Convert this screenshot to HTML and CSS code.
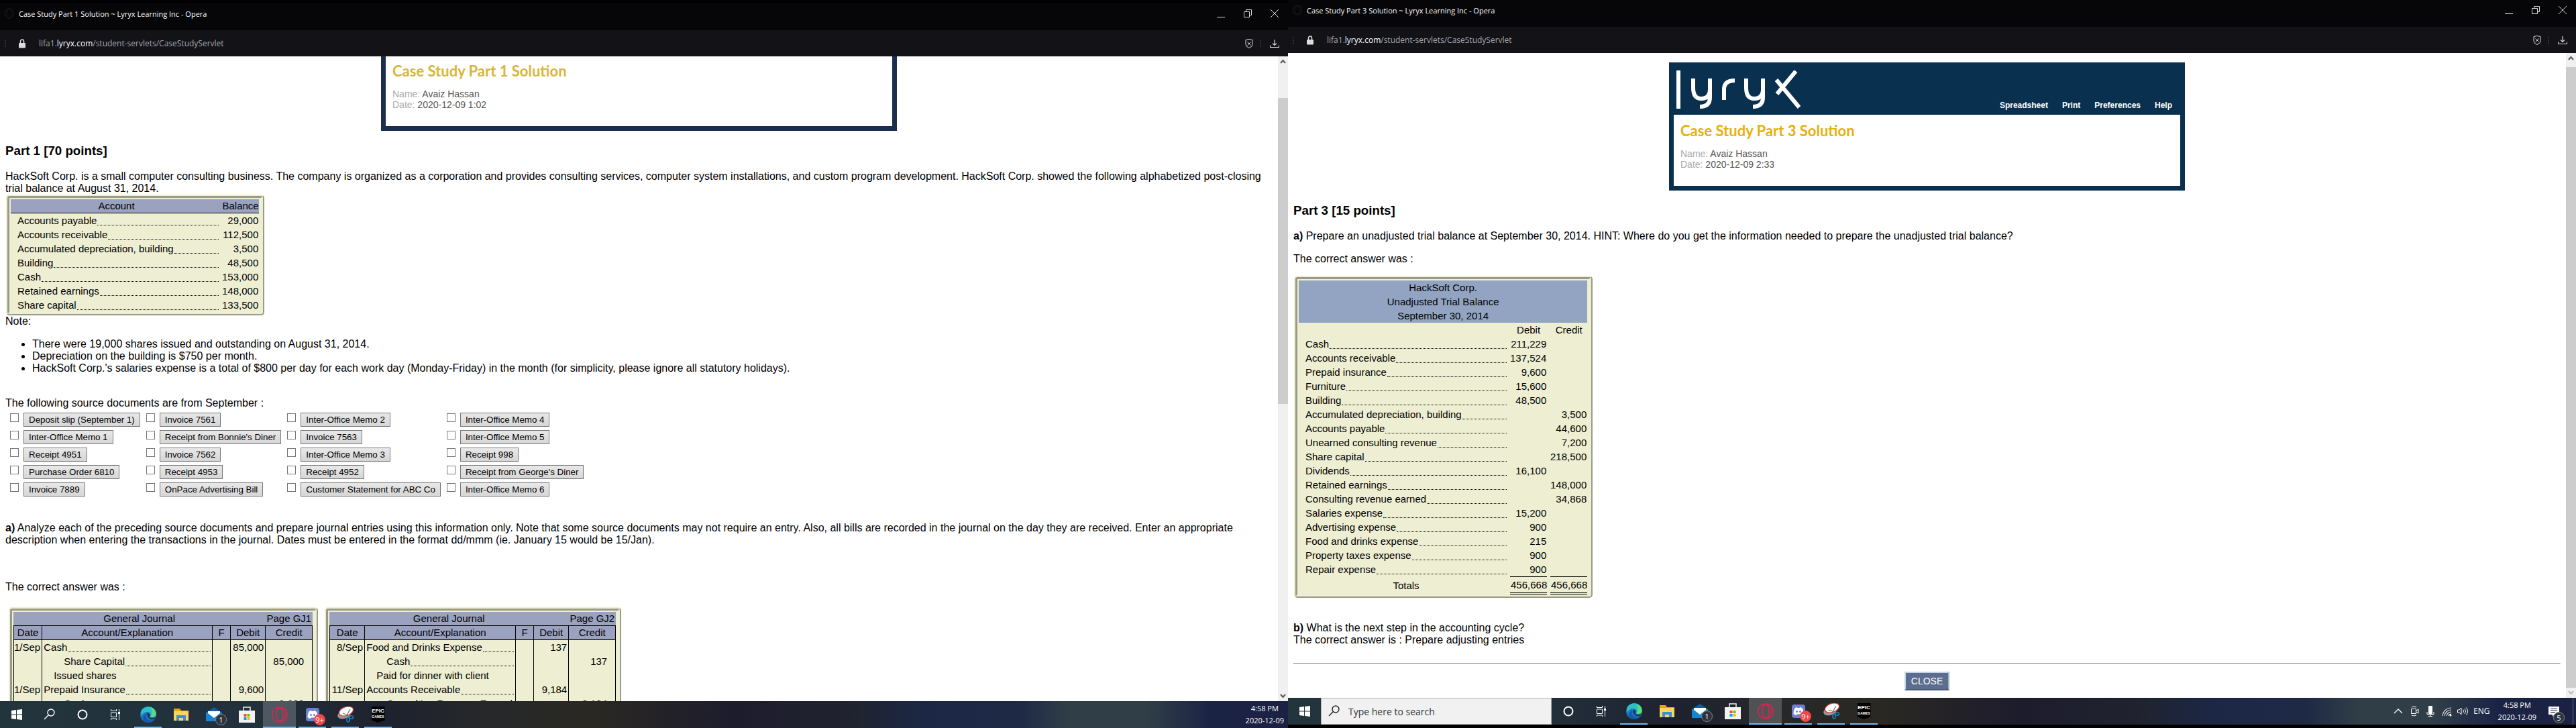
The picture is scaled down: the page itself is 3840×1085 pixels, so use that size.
FILE: index.html
```html
<!DOCTYPE html>
<html lang="en">
<head>
  <meta charset="UTF-8" />
  <meta name="viewport" content="width=device-width, initial-scale=1.0" />
  <title>Case Study Solutions ~ Lyryx Learning Inc</title>
  <link rel="stylesheet" href="styles.css">
</head>
<body>

  <!-- Shared icons -->
  <svg class="sprite" aria-hidden="true">
    <symbol id="i-opera-dim" viewBox="0 0 16 28"><ellipse cx="8" cy="14" rx="6" ry="7" fill="none" stroke="#131315" stroke-width="2"/><ellipse cx="8" cy="14" rx="3" ry="6" fill="none" stroke="#131315"/></symbol>
    <symbol id="i-min" viewBox="0 0 12 12"><path d="M0 11.5h12" stroke="#ddd"/></symbol>
    <symbol id="i-restore" viewBox="0 0 12 12"><path d="M.5 3.5h8v8h-8zM3.5 3.500v-3h8v8h-3" fill="none" stroke="#ddd"/></symbol>
    <symbol id="i-close" viewBox="0 0 12 12"><path d="M0 0l12 12M12 0L0 12" stroke="#ddd"/></symbol>
    <symbol id="i-lock" viewBox="0 0 12 14"><rect x="1" y="6" width="10" height="7.500" rx="1" fill="#ddd"/><path d="M3.500 6V3.500a2.500 2.500 0 0 1 5 0V6" fill="none" stroke="#ddd" stroke-width="1.500"/></symbol>
    <symbol id="i-shield" viewBox="0 0 12 14"><path d="M1 1.500q5-2 10 0v7q0 3-5 5-5-2-5-5zM3.500 4.500l5 5M8.500 4.500l-5 5" fill="none" stroke="#ddd"/></symbol>
    <symbol id="i-download" viewBox="0 0 14 14"><path d="M7 1v8M4 6.500l3 3 3-3M.5 9.500v3h13v-3" fill="none" stroke="#ddd" stroke-width="1.200"/></symbol>
    <symbol id="i-up" viewBox="0 0 9 7"><path d="M1 6l3.500-4L8 6" fill="none" stroke="currentColor" stroke-width="2"/></symbol>
    <symbol id="i-down" viewBox="0 0 9 7"><path d="M1 1l3.500 4L8 1" fill="none" stroke="currentColor" stroke-width="2"/></symbol>

    <symbol id="i-windows" viewBox="0 0 24 24"><path d="M4 6l7-1v6.500H4zM12 5l8-1v7.500h-8zM4 12.500h7V19l-7-1zM12 12.500h8V20l-8-1z" fill="#fff"/></symbol>
    <symbol id="i-search" viewBox="0 0 24 24"><circle cx="14" cy="9" r="5" fill="none" stroke="currentColor" stroke-width="1.400"/><path d="M10.500 12.500L4 19" stroke="currentColor" stroke-width="1.400"/></symbol>
    <symbol id="i-cortana" viewBox="0 0 24 24"><circle cx="12" cy="12" r="6.500" fill="none" stroke="#fff" stroke-width="2"/></symbol>
    <symbol id="i-taskview" viewBox="0 0 24 24"><path d="M5.500 9h8v6.500h-8zM5.500 4v2.500h8V4M5.500 20v-2h8v2M17.500 4v16" fill="none" stroke="#fff"/><path d="M16 8h3v3h-3z" fill="#fff"/></symbol>
    <symbol id="i-edge" viewBox="0 0 24 24"><circle cx="12" cy="12" r="12" fill="#1b74c4"/><path d="M1 8C4-2 21-3 23.500 9c1 6-5 8-8.500 6 2-3 0-7-4-7C6 8 3 11 2 15z" fill="#2ec0c8"/><path d="M15 1c6 2 9 6 8.700 11-.7 4-5 5-8.700 3.300 3-4 4-9 0-14.300z" fill="#5bdc75"/><path d="M10 11c-3 3-1 9 4 10 3 .5 6-1 8-3-4 7-14 8-18 2 0-5 2-8 6-9z" fill="#1558a5"/><path d="M10.500 10c3-.5 4.500 2 2.500 5 2 3 6 3 9.500 1l-1 2.500c-6 2.500-11-1-11-8.500z" fill="#20303a"/></symbol>
    <symbol id="i-folder" viewBox="0 0 24 24"><path d="M1 3h9l2 3h11v4H1z" fill="#e8a60c"/><path d="M1 7h22v14H1z" fill="#fcd462"/><path d="M5 21v-8h14v8h-4v-4H9v4z" fill="#3b8fd6"/></symbol>
    <symbol id="i-mail" viewBox="0 0 24 24"><path d="M0 9l12-8 12 8z" fill="#0d5ea8"/><path d="M0 9h24v13H0z" fill="#1685d8"/><path d="M3 7h18v3l-9 7-9-7z" fill="#fff"/><path d="M0 9l12 9L24 9v13H0z" fill="#1685d8"/></symbol>
    <symbol id="i-store" viewBox="0 0 24 24"><path d="M7 6V1h10v5" fill="none" stroke="#eee" stroke-width="1.500"/><path d="M0 6h24v18H0z" fill="#f2f2f2"/><path d="M7.500 11h4v4h-4z" fill="#f25022"/><path d="M12.500 11h4v4h-4z" fill="#7fba00"/><path d="M7.500 16h4v4h-4z" fill="#00a4ef"/><path d="M12.500 16h4v4h-4z" fill="#ffb900"/></symbol>
    <symbol id="i-opera" viewBox="0 0 24 24"><g fill="none" stroke="#e0234e"><circle cx="12" cy="12" r="11.200" stroke-width="1.300"/><ellipse cx="12" cy="12" rx="5" ry="10" stroke-width="1.500"/><path d="M15 2.500c7 3 7 16 0 19"/></g></symbol>
    <symbol id="i-discord" viewBox="0 0 24 24"><rect x="2" y="2" width="20" height="20" rx="4" fill="#6c7fd0"/><path d="M6 8q2-2 4-2l.5 1h3l.5-1q2 0 4 2 2 4 1.500 8-2 2-4 2l-1-1.500h-5L8.500 18q-2 0-4-2Q4.500 12 6 8z" fill="#fff"/><circle cx="9.500" cy="12.500" r="1.500" fill="#6c7fd0"/><circle cx="14.500" cy="12.500" r="1.500" fill="#6c7fd0"/></symbol>
    <symbol id="i-snip" viewBox="0 0 24 24"><ellipse cx="10" cy="12" rx="10" ry="6" fill="#999" transform="rotate(-15 10 12)"/><ellipse cx="13" cy="7" rx="11" ry="6.500" fill="#fff" stroke="#d33a32" stroke-width="1.300" transform="rotate(-20 13 7)"/><path d="M19 4l-5 9M8 10l8 3" stroke="#777" stroke-width="1.300"/><g fill="none" stroke="#1e86c8" stroke-width="1.600"><ellipse cx="20.500" cy="16" rx="3.200" ry="2"/><ellipse cx="16" cy="19.500" rx="2" ry="3.500"/></g></symbol>
    <symbol id="i-tray-up" viewBox="0 0 16 16"><path d="M2 11l6-6 6 6" fill="none" stroke="#fff" stroke-width="1.300"/></symbol>
    <symbol id="i-camera" viewBox="0 0 16 16"><path d="M3.500 4.500h7v7h-7zM11 7l3-2v6l-3-2M4 2q3.500-2 7 0M4 14q3.500 2 7 0" fill="none" stroke="#fff"/></symbol>
    <symbol id="i-mic" viewBox="0 0 16 16"><rect x="5" y="0" width="6" height="12" rx="1" fill="#fff"/><path d="M3 9v3.500h10V9M8 12v3.500M5 15.500h6" fill="none" stroke="#fff"/></symbol>
    <symbol id="i-wifi" viewBox="0 0 16 16"><path d="M2 15A13 13 0 0 1 15 3M5 15A10 10 0 0 1 15 6M8 15a7 7 0 0 1 7-6M11 15a4 4 0 0 1 4-3" fill="none" stroke="#ddd" stroke-width="1.200"/><circle cx="14" cy="14" r="1.500" fill="#fff"/></symbol>
    <symbol id="i-sound" viewBox="0 0 16 16"><path d="M.5 6h2.500l3-3v10l-3-3H.5zM8.500 5.500q2 2.500 0 5M11 4q3 4 0 8M13.500 2.500q4 5.500 0 11" fill="none" stroke="#fff"/></symbol>
    <symbol id="i-notes" viewBox="0 0 16 16"><path d="M0 1h16v12h-7l-3 3v-3H0z" fill="#fff"/><path d="M3 4.500h10M3 7h10M3 9.500h7" stroke="#1c2443"/></symbol>
  </svg>

  <!-- Left screen -->
  <div class="screen screen-left">
    <header class="title-bar">
      <svg class="opera-dim"><use href="#i-opera-dim"/></svg>
      <span class="window-title">Case Study Part 1 Solution ~ Lyryx Learning Inc - Opera</span>
      <button class="win-btn" aria-label="Minimize"><svg><use href="#i-min"/></svg></button>
      <button class="win-btn" aria-label="Restore"><svg><use href="#i-restore"/></svg></button>
      <button class="win-btn" aria-label="Close"><svg><use href="#i-close"/></svg></button>
    </header>
    <div class="address-bar">
      <span class="grip"></span>
      <svg class="lock"><use href="#i-lock"/></svg>
      <span class="url">lifa1.<b>lyryx.com</b>/student-servlets/CaseStudyServlet</span>
      <svg class="shield"><use href="#i-shield"/></svg>
      <span class="grip"></span>
      <svg class="download"><use href="#i-download"/></svg>
    </div>

    <div class="viewport">
      <main class="doc doc-scrolled">
        <div class="card card-faded">
          <div class="card-body">
            <h2>Case Study Part 1 Solution</h2>
            <div><span class="key">Name:</span> Avaiz Hassan</div>
            <div><span class="key">Date:</span> 2020-12-09 1:02</div>
          </div>
        </div>

        <h3>Part 1 [70 points]</h3>
        <p class="intro">HackSoft Corp. is a small computer consulting business. The company is organized as a corporation and provides consulting services, computer system installations, and custom program development. HackSoft Corp. showed the following alphabetized post-closing trial balance at August 31, 2014.</p>

        <table class="ledger">
          <thead>
            <tr><th class="name">Account</th><th class="amount">Balance</th></tr>
          </thead>
          <tbody>
            <tr><td><div class="leader">Accounts payable</div></td><td>29,000</td></tr>
            <tr><td><div class="leader">Accounts receivable</div></td><td>112,500</td></tr>
            <tr><td><div class="leader">Accumulated depreciation, building</div></td><td>3,500</td></tr>
            <tr><td><div class="leader">Building</div></td><td>48,500</td></tr>
            <tr><td><div class="leader">Cash</div></td><td>153,000</td></tr>
            <tr><td><div class="leader">Retained earnings</div></td><td>148,000</td></tr>
            <tr><td><div class="leader">Share capital</div></td><td>133,500</td></tr>
          </tbody>
        </table>
        <div>Note:</div>
        <ul>
          <li>There were 19,000 shares issued and outstanding on August 31, 2014.</li>
          <li>Depreciation on the building is $750 per month.</li>
          <li>HackSoft Corp.'s salaries expense is a total of $800 per day for each work day (Monday-Friday) in the month (for simplicity, please ignore all statutory holidays).</li>
        </ul>

        <div class="sources-title">The following source documents are from September :</div>
        <div class="sources">
          <div><input type="checkbox" aria-label="Deposit slip (September 1)"><button>Deposit slip (September 1)</button></div>
          <div><input type="checkbox" aria-label="Invoice 7561"><button>Invoice 7561</button></div>
          <div><input type="checkbox" aria-label="Inter-Office Memo 2"><button>Inter-Office Memo 2</button></div>
          <div><input type="checkbox" aria-label="Inter-Office Memo 4"><button>Inter-Office Memo 4</button></div>

          <div><input type="checkbox" aria-label="Inter-Office Memo 1"><button>Inter-Office Memo 1</button></div>
          <div><input type="checkbox" aria-label="Receipt from Bonnie's Diner"><button>Receipt from Bonnie's Diner</button></div>
          <div><input type="checkbox" aria-label="Invoice 7563"><button>Invoice 7563</button></div>
          <div><input type="checkbox" aria-label="Inter-Office Memo 5"><button>Inter-Office Memo 5</button></div>

          <div><input type="checkbox" aria-label="Receipt 4951"><button>Receipt 4951</button></div>
          <div><input type="checkbox" aria-label="Invoice 7562"><button>Invoice 7562</button></div>
          <div><input type="checkbox" aria-label="Inter-Office Memo 3"><button>Inter-Office Memo 3</button></div>
          <div><input type="checkbox" aria-label="Receipt 998"><button>Receipt 998</button></div>

          <div><input type="checkbox" aria-label="Purchase Order 6810"><button>Purchase Order 6810</button></div>
          <div><input type="checkbox" aria-label="Receipt 4953"><button>Receipt 4953</button></div>
          <div><input type="checkbox" aria-label="Receipt 4952"><button>Receipt 4952</button></div>
          <div><input type="checkbox" aria-label="Receipt from George's Diner"><button>Receipt from George's Diner</button></div>

          <div><input type="checkbox" aria-label="Invoice 7889"><button>Invoice 7889</button></div>
          <div><input type="checkbox" aria-label="OnPace Advertising Bill"><button>OnPace Advertising Bill</button></div>
          <div><input type="checkbox" aria-label="Customer Statement for ABC Co"><button>Customer Statement for ABC Co</button></div>
          <div><input type="checkbox" aria-label="Inter-Office Memo 6"><button>Inter-Office Memo 6</button></div>
        </div>

        <p class="question"><b>a)</b> Analyze each of the preceding source documents and prepare journal entries using this information only. Note that some source documents may not require an entry. Also, all bills are recorded in the journal on the day they are received. Enter an appropriate description when entering the transactions in the journal. Dates must be entered in the format dd/mmm (ie. January 15 would be 15/Jan).</p>
        <p class="answer">The correct answer was :</p>

        <div class="journals">
          <table class="journal">
            <thead>
              <tr class="page"><th colspan="4">General Journal</th><th>Page GJ1</th></tr>
              <tr><th class="date">Date</th><th class="acct">Account/Explanation</th><th class="folio">F</th><th class="debit">Debit</th><th class="credit">Credit</th></tr>
            </thead>
            <tbody>
              <tr><td>1/Sep</td><td><div class="leader">Cash</div></td><td></td><td>85,000</td><td></td></tr>
              <tr><td></td><td><div class="leader indent">Share Capital</div></td><td></td><td></td><td>85,000</td></tr>
              <tr><td></td><td class="memo">Issued shares</td><td></td><td></td><td></td></tr>
              <tr><td>1/Sep</td><td><div class="leader">Prepaid Insurance</div></td><td></td><td>9,600</td><td></td></tr>
              <tr><td></td><td><div class="leader indent">Cash</div></td><td></td><td></td><td>9,600</td></tr>
            </tbody>
          </table>
          <table class="journal journal-two">
            <thead>
              <tr class="page"><th colspan="4">General Journal</th><th>Page GJ2</th></tr>
              <tr><th class="date">Date</th><th class="acct">Account/Explanation</th><th class="folio">F</th><th class="debit">Debit</th><th class="credit">Credit</th></tr>
            </thead>
            <tbody>
              <tr><td>8/Sep</td><td><div class="leader">Food and Drinks Expense</div></td><td></td><td>137</td><td></td></tr>
              <tr><td></td><td><div class="leader indent">Cash</div></td><td></td><td></td><td>137</td></tr>
              <tr><td></td><td class="memo">Paid for dinner with client</td><td></td><td></td><td></td></tr>
              <tr><td>11/Sep</td><td><div class="leader">Accounts Receivable</div></td><td></td><td>9,184</td><td></td></tr>
              <tr><td></td><td><div class="leader indent">Consulting Revenue Earned</div></td><td></td><td></td><td>9,184</td></tr>
            </tbody>
          </table>
        </div>
      </main>
      <div class="scrollbar">
        <svg><use href="#i-up"/></svg>
        <div class="track"><div class="thumb thumb-left"></div></div>
        <svg><use href="#i-down"/></svg>
      </div>
    </div>

    <footer class="taskbar">
      <div class="task"><svg><use href="#i-windows"/></svg></div>
      <div class="task"><svg><use href="#i-search"/></svg></div>
      <div class="task"><svg><use href="#i-cortana"/></svg></div>
      <div class="task"><svg><use href="#i-taskview"/></svg></div>
      <div class="task open"><svg><use href="#i-edge"/></svg></div>
      <div class="task"><svg><use href="#i-folder"/></svg></div>
      <div class="task"><svg><use href="#i-mail"/></svg><span class="badge">1</span></div>
      <div class="task"><svg><use href="#i-store"/></svg></div>
      <div class="task open current"><svg><use href="#i-opera"/></svg></div>
      <div class="task open"><svg><use href="#i-discord"/></svg><span class="badge badge-red">9+</span></div>
      <div class="task open"><svg><use href="#i-snip"/></svg></div>
      <div class="task open"><span class="epic">EPIC<small>GAMES</small></span></div>
      <div class="tray">
        <div class="clock">4:58 PM<br>2020-12-09</div>
      </div>
    </footer>
  </div>

  <!-- Right screen -->
  <div class="screen screen-right">
    <header class="title-bar">
      <svg class="opera-dim"><use href="#i-opera-dim"/></svg>
      <span class="window-title">Case Study Part 3 Solution ~ Lyryx Learning Inc - Opera</span>
      <button class="win-btn" aria-label="Minimize"><svg><use href="#i-min"/></svg></button>
      <button class="win-btn" aria-label="Restore"><svg><use href="#i-restore"/></svg></button>
      <button class="win-btn" aria-label="Close"><svg><use href="#i-close"/></svg></button>
    </header>
    <div class="address-bar">
      <span class="grip"></span>
      <svg class="lock"><use href="#i-lock"/></svg>
      <span class="url">lifa1.<b>lyryx.com</b>/student-servlets/CaseStudyServlet</span>
      <svg class="shield"><use href="#i-shield"/></svg>
      <span class="grip"></span>
      <svg class="download"><use href="#i-download"/></svg>
    </div>

    <div class="viewport">
      <main class="doc">
        <div class="card">
          <div class="banner">
            <svg class="logo" viewBox="0 0 186 57" role="img" aria-label="lyryx">
              <g fill="none" stroke="#fff" stroke-width="6">
                <path d="M3 0v57"/>
                <path d="M25 12v14q0 16 12 16 13 0 13-14V12M50 26v14q0 14-15 14"/>
                <path d="M71 44V28q0-13 16-13"/>
                <path d="M104 12v14q0 16 12 16 13 0 13-14V12M129 26v14q0 14-15 14"/>
                <path d="M178 1l-28 34M149 14l34 41"/>
              </g>
            </svg>
            <nav>
              <a href="#">Spreadsheet</a>
              <a href="#">Print</a>
              <a href="#">Preferences</a>
              <a href="#">Help</a>
            </nav>
          </div>
          <div class="card-body">
            <h2>Case Study Part 3 Solution</h2>
            <div><span class="key">Name:</span> Avaiz Hassan</div>
            <div><span class="key">Date:</span> 2020-12-09 2:33</div>
          </div>
        </div>

        <h3>Part 3 [15 points]</h3>
        <p><b>a)</b> Prepare an unadjusted trial balance at September 30, 2014. HINT: Where do you get the information needed to prepare the unadjusted trial balance?</p>
        <p>The correct answer was :</p>

        <table class="ledger trial">
          <thead>
            <tr><th colspan="3">HackSoft Corp.</th></tr>
            <tr><th colspan="3">Unadjusted Trial Balance</th></tr>
            <tr><th colspan="3">September 30, 2014</th></tr>
            <tr class="columns"><td class="name"></td><td class="amount">Debit</td><td class="amount amount-last">Credit</td></tr>
          </thead>
          <tbody>
            <tr><td><div class="leader">Cash</div></td><td>211,229</td><td></td></tr>
            <tr><td><div class="leader">Accounts receivable</div></td><td>137,524</td><td></td></tr>
            <tr><td><div class="leader">Prepaid insurance</div></td><td>9,600</td><td></td></tr>
            <tr><td><div class="leader">Furniture</div></td><td>15,600</td><td></td></tr>
            <tr><td><div class="leader">Building</div></td><td>48,500</td><td></td></tr>
            <tr><td><div class="leader">Accumulated depreciation, building</div></td><td></td><td>3,500</td></tr>
            <tr><td><div class="leader">Accounts payable</div></td><td></td><td>44,600</td></tr>
            <tr><td><div class="leader">Unearned consulting revenue</div></td><td></td><td>7,200</td></tr>
            <tr><td><div class="leader">Share capital</div></td><td></td><td>218,500</td></tr>
            <tr><td><div class="leader">Dividends</div></td><td>16,100</td><td></td></tr>
            <tr><td><div class="leader">Retained earnings</div></td><td></td><td>148,000</td></tr>
            <tr><td><div class="leader">Consulting revenue earned</div></td><td></td><td>34,868</td></tr>
            <tr><td><div class="leader">Salaries expense</div></td><td>15,200</td><td></td></tr>
            <tr><td><div class="leader">Advertising expense</div></td><td>900</td><td></td></tr>
            <tr><td><div class="leader">Food and drinks expense</div></td><td>215</td><td></td></tr>
            <tr><td><div class="leader">Property taxes expense</div></td><td>900</td><td></td></tr>
            <tr><td><div class="leader">Repair expense</div></td><td>900</td><td></td></tr>
          </tbody>
          <tfoot>
            <tr><td>Totals</td><td><div class="total">456,668</div></td><td><div class="total total-last">456,668</div></td></tr>
          </tfoot>
        </table>

        <p class="question-b"><b>b)</b> What is the next step in the accounting cycle?<br>The correct answer is : Prepare adjusting entries</p>
        <hr>
        <button class="close-btn">CLOSE</button>
      </main>
      <div class="scrollbar">
        <svg><use href="#i-up"/></svg>
        <div class="track"><div class="thumb thumb-right"></div></div>
        <svg class="faded"><use href="#i-down"/></svg>
      </div>
    </div>

    <footer class="taskbar">
      <div class="task"><svg><use href="#i-windows"/></svg></div>
      <label class="search-box"><svg><use href="#i-search"/></svg><input type="text" placeholder="Type here to search"></label>
      <div class="task"><svg><use href="#i-cortana"/></svg></div>
      <div class="task"><svg><use href="#i-taskview"/></svg></div>
      <div class="task open"><svg><use href="#i-edge"/></svg></div>
      <div class="task"><svg><use href="#i-folder"/></svg></div>
      <div class="task"><svg><use href="#i-mail"/></svg><span class="badge">1</span></div>
      <div class="task"><svg><use href="#i-store"/></svg></div>
      <div class="task open current"><svg><use href="#i-opera"/></svg></div>
      <div class="task open"><svg><use href="#i-discord"/></svg><span class="badge badge-red">9+</span></div>
      <div class="task open"><svg><use href="#i-snip"/></svg></div>
      <div class="task open"><span class="epic">EPIC<small>GAMES</small></span></div>
      <div class="tray tray-full">
        <svg><use href="#i-tray-up"/></svg>
        <svg><use href="#i-camera"/></svg>
        <svg><use href="#i-mic"/></svg>
        <svg><use href="#i-wifi"/></svg>
        <svg><use href="#i-sound"/></svg>
        <span class="lang">ENG</span>
        <div class="clock">4:58 PM<br>2020-12-09</div>
        <div class="notes"><svg><use href="#i-notes"/></svg><span class="badge">5</span></div>
      </div>
      <div class="show-desktop"></div>
    </footer>
  </div>

</body>
</html>
```

FILE: styles.css
```css
* {
  box-sizing: border-box;
}

body {
  margin: 0;
  height: 100vh;
  display: flex;
  background: #000;
  color: #000;
  font-family: "Liberation Sans", Arial, sans-serif;
  font-size: 16px;
  line-height: 18px;
}

svg {
  display: block;
  flex: none;
}

.sprite {
  display: none;
}

/* Each monitor takes half of the window */
.screen {
  flex: 1;
  min-width: 0;
  display: flex;
  flex-direction: column;
}

.screen-left {
  padding-top: 5px;
}

.screen-right {
  padding-bottom: 5px;
}

/* Opera window */
.title-bar {
  height: 40px;
  flex: none;
  display: flex;
  align-items: flex-start;
  background: #060608;
  color: #fff;
  font-family: "Open Sans", sans-serif;
  font-size: 11px;
  padding: 1px 0 0 6px;
}

.opera-dim {
  width: 16px;
  height: 28px;
}

.window-title {
  flex: 1;
  line-height: 30px;
  margin-left: 6px;
}

.win-btn {
  width: 40px;
  height: 28px;
  padding: 0 14px;
  border: none;
  background: none;
}

.win-btn svg {
  width: 12px;
  height: 12px;
}

.address-bar {
  height: 39px;
  flex: none;
  display: flex;
  align-items: center;
  background: #121217;
  color: #a5a7b0;
  font-family: "Open Sans", sans-serif;
  font-size: 12px;
  padding: 0 13px 0 7px;
}

.grip {
  width: 2px;
  height: 10px;
  background: repeating-linear-gradient(#33333b 0 2px, transparent 2px 4px);
}

.lock {
  width: 12px;
  height: 14px;
  margin-left: 18px;
}

.url {
  flex: 1;
  margin-left: 19px;
}

.url b {
  color: #fff;
  font-weight: 400;
}

.shield {
  width: 12px;
  height: 14px;
  margin-right: 10px;
}

.download {
  width: 14px;
  height: 14px;
  margin-left: 13px;
}

.viewport {
  flex: 1;
  min-height: 0;
  display: flex;
  background: #fff;
  overflow: hidden;
}

.doc {
  flex: 1;
  padding: 14px 8px 0;
  overflow: hidden;
}

.doc-scrolled {
  padding-top: 0;
}

.scrollbar {
  width: 15px;
  display: flex;
  flex-direction: column;
  align-items: center;
  background: #f0f0f0;
  color: #555;
}

.scrollbar svg {
  width: 9px;
  height: 7px;
  margin: 4px 0;
}

.scrollbar .faded {
  color: #bbb;
}

.track {
  flex: 1;
  width: 100%;
  display: flex;
  flex-direction: column;
}

.thumb {
  background: #cdcdcd;
}

.thumb-left {
  height: 49%;
  margin-top: 47px;
}

.thumb-right {
  flex: 1;
  margin-top: 6px;
}

/* Page header card */
.card {
  width: 769px;
  margin: 0 auto;
  background: #09304f;
  padding: 0 7px 7px;
}

.card-faded {
  background: #1c2e4e;
}

.banner {
  height: 78px;
  display: flex;
  justify-content: space-between;
  align-items: flex-end;
  padding: 0 12px 9px 4px;
}

.logo {
  width: 186px;
  height: 57px;
}

.banner nav {
  display: flex;
  gap: 21px;
  line-height: 10px;
}

.banner a {
  color: #fff;
  font-size: 12px;
  font-weight: bold;
  text-decoration: none;
}

.card-body {
  background: #fff;
  color: #555;
  padding: 12px 10px 24px;
  font-size: 14px;
  line-height: 16px;
}

.card-faded .card-body {
  padding-top: 10px;
}

.card h2 {
  margin: 0 0 14px;
  color: #e8b00c;
  font-family: Lato, sans-serif;
  font-size: 22px;
  line-height: 24px;
}

.card-faded h2 {
  color: #d9b53a;
}

.key {
  color: #aaa;
}

h3 {
  margin: 19px 0 18px;
  line-height: 22px;
}

p {
  margin: 16px 0;
}

.intro {
  margin: 0;
}

/* Ledger tables */
.ledger,
.journal {
  border: 5px ridge #eeeed2;
  border-radius: 5px;
  background: #eeeed2;
  border-spacing: 0;
  padding: 2px 3px 0 2px;
  font-size: 15px;
}

.ledger {
  margin-left: 1px;
}

.ledger th,
.ledger td,
.journal th,
.journal td {
  height: 21px;
  padding: 0;
  font-weight: 400;
}

.ledger th {
  background: #9ba2c0;
}

.ledger thead th {
  border-bottom: 1px solid #000;
}

.ledger .name {
  width: 315px;
}

.ledger .amount {
  width: 55px;
}

.ledger .amount-last {
  width: 60px;
}

.ledger td {
  text-align: right;
  padding-right: 1px;
}

.ledger td:first-child {
  padding: 0 5px 0 10px;
}

.leader {
  display: flex;
}

.leader::after {
  content: '';
  flex: 1;
  border-bottom: 1px dotted #000;
  margin: 0 0 2px 1px;
}

.trial thead th {
  background: #93a4c3;
  border: none;
}

.trial .columns td.amount {
  text-align: center;
  padding: 0;
}

.trial .columns td.amount-last {
  padding-left: 5px;
}

.trial tfoot td {
  height: 27px;
  padding: 0;
}

.trial tfoot td:first-child {
  text-align: center;
}

.total {
  height: 27px;
  padding-top: 3px;
  border-top: 1px solid #000;
  border-bottom: 3px double #000;
}

.total-last {
  margin-left: 5px;
}

ul {
  margin: 16px 0;
  padding-left: 40px;
}

/* Source documents */
.sources-title {
  margin-top: 34px;
}

.sources {
  display: grid;
  grid-template-columns: repeat(4, max-content);
  column-gap: 9px;
  margin: 2px 0 0 7px;
}

.sources div {
  height: 26px;
  display: flex;
  align-items: center;
  gap: 7px;
}

.sources input {
  appearance: none;
  width: 13px;
  height: 13px;
  margin: 0 0 5px;
  border: 1px solid #767676;
  background: #fff;
}

.sources button {
  height: 21px;
  padding: 0 7px;
  border: 1px solid #767676;
  background: linear-gradient(#e8e8e8, #d6d6d6);
  font-family: "Liberation Sans", Arial, sans-serif;
}

.question {
  margin: 36px 0 0;
}

.answer {
  margin: 52px 0 21px;
}

/* General journal pages */
.journals {
  display: flex;
  align-items: flex-start;
  gap: 10px;
  margin-left: 5px;
}

.journal th {
  background: #9ba2c0;
  border-bottom: 1px solid #000;
}

.journal tr:not(.page) > * {
  border-left: 1px solid #000;
}

.journal tr:not(.page) > :last-child {
  border-right: 1px solid #000;
}

.journal .page th:last-child {
  text-align: right;
  padding-right: 2px;
}

.date {
  width: 42px;
}

.acct {
  width: 254px;
}

.folio {
  width: 27px;
}

.debit {
  width: 52px;
}

.credit {
  width: 71px;
}

.journal-two .date {
  width: 52px;
}

.journal-two .acct {
  width: 225px;
}

.journal td {
  text-align: right;
  padding-right: 2px;
}

.journal td:nth-child(2) {
  text-align: left;
  padding-left: 2px;
}

.journal td:last-child {
  padding-right: 12px;
}

.journal .indent {
  padding-left: 30px;
}

.journal td.memo {
  padding-left: 17px;
}

.question-b {
  margin: 36px 0 25px;
}

hr {
  margin: 0 0 11px;
}

.close-btn {
  display: block;
  width: 67px;
  height: 28px;
  margin: 0 auto;
  padding: 0;
  border: 2px solid;
  border-color: #c5d3e2 #9fb2c9 #4c5a70 #c5d3e2;
  background: #5b6e90;
  color: #fff;
  font-family: "Liberation Sans", Arial, sans-serif;
  font-size: 14px;
}

/* Windows taskbar */
.taskbar {
  height: 40px;
  flex: none;
  display: flex;
  color: #fff;
  font-family: "Open Sans", sans-serif;
  background: linear-gradient(to right, #22343c 0, #22303c 20%, #1e222e 30%, #26282a 38%, #2a2822 46%, #1d1c2d 57%, #20232f 66%, #1b2745 72%, #1d2945 79%, #303e48 83%, #303e48 89%, #1b2345 94%, #1b2142 100%);
}

.task {
  width: 49px;
  display: flex;
  align-items: center;
  justify-content: center;
  position: relative;
}

.task svg {
  width: 24px;
  height: 24px;
}

.open::after {
  content: '';
  position: absolute;
  left: 4px;
  right: 4px;
  bottom: 0;
  height: 2px;
  background: #76b9ed;
}

.current {
  background: rgba(255, 255, 255, 0.2);
}

.current::after {
  left: 0;
  right: 0;
}

.badge {
  position: absolute;
  right: 5px;
  bottom: 4px;
  width: 17px;
  height: 17px;
  border: 1px solid #888;
  border-radius: 50%;
  background: #2c3440;
  font-size: 11px;
  line-height: 15px;
  text-align: center;
}

.badge-red {
  border-color: #f04747;
  background: #f04747;
}

.epic {
  width: 20px;
  height: 24px;
  background: #000;
  clip-path: polygon(0 0, 100% 0, 100% 84%, 50% 100%, 0 84%);
  font-family: "Liberation Sans", Arial, sans-serif;
  font-size: 8px;
  font-weight: bold;
  line-height: 10px;
  padding-top: 2px;
  text-align: center;
}

.epic small {
  display: block;
  font-size: 5px;
  line-height: 6px;
}

.search-box {
  width: 344px;
  display: flex;
  align-items: center;
  border: 1px solid #b0b0b0;
  background: #f1f1f1;
  color: #222;
  padding-left: 7px;
}

.search-box svg {
  width: 24px;
  height: 24px;
}

.search-box input {
  flex: 1;
  min-width: 0;
  border: none;
  background: none;
  padding: 0 0 0 9px;
  font-family: "Open Sans", sans-serif;
  font-size: 14px;
}

.search-box input::placeholder {
  color: #333;
}

.tray {
  margin-left: auto;
  display: flex;
  align-items: center;
  gap: 8px;
  padding-right: 6px;
}

.tray-full {
  padding-right: 20px;
}

.tray svg {
  width: 16px;
  height: 16px;
}

.lang {
  font-size: 12px;
}

.clock {
  font-size: 11px;
  line-height: 18px;
  text-align: center;
}

.tray-full .clock {
  margin: 0 10px 0 4px;
}

.notes {
  position: relative;
}

.notes .badge {
  right: -8px;
  bottom: -10px;
}

.show-desktop {
  width: 5px;
  border-left: 1px solid #6a7088;
}
```
